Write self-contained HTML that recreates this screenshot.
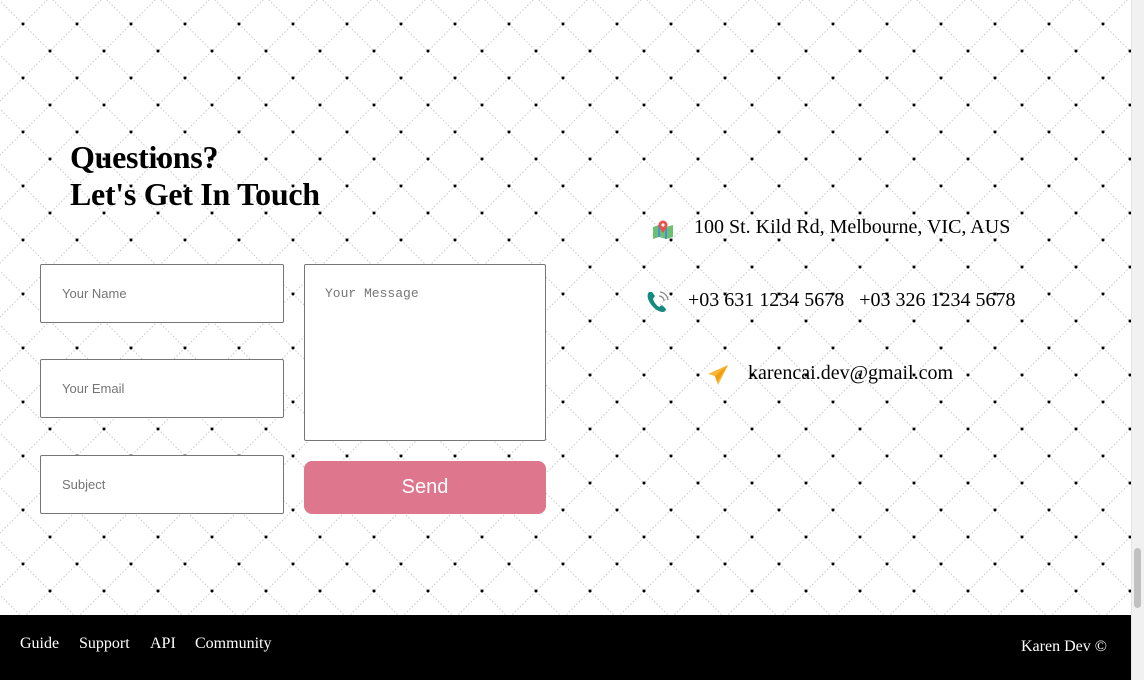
<!DOCTYPE html>
<html><head><style>
html,body{margin:0;padding:0;width:1144px;height:680px;overflow:hidden;background:#fff;font-family:"Liberation Serif",serif;}
#bg{position:absolute;left:0;top:0;width:1131px;height:615px}
.sb{position:absolute;left:1131px;top:0;width:13px;height:680px;background:#f1f1f1;border-left:1px solid #e4e4e4}
.thumb{position:absolute;left:1134px;top:548px;width:7px;height:60px;background:#c1c1c1;border-radius:4px}
h1{position:absolute;left:70px;top:139px;margin:0;font-size:32px;line-height:37px;font-weight:bold;color:#000;letter-spacing:-0.3px}
.in{position:absolute;box-sizing:border-box;border:1px solid #767676;background:#fff;font-family:"Liberation Sans",sans-serif;font-size:13px;color:#757575;padding-left:21px;border-radius:2px}
.ta{font-family:"Liberation Mono",monospace;padding:20px;font-size:13px}
.btn{position:absolute;left:304px;top:461px;width:242px;height:53px;background:#de778d;border-radius:8px;color:#fff;font-family:"Liberation Sans",sans-serif;font-size:20px;text-align:center;line-height:53px}
.t{position:absolute;font-size:20px;color:#000;white-space:nowrap}
footer{position:absolute;left:0;top:615px;width:1131px;height:65px;background:#000;color:#fff;font-size:16px}
footer span{position:absolute;top:20px}
</style></head><body>
<svg id="bg" width="1131" height="615">
<defs><pattern id="p" width="54" height="54" patternUnits="userSpaceOnUse" patternTransform="translate(23,24)">
<path d="M0 0L54 54M54 0L0 54" stroke="#c8c8c8" stroke-width="1" stroke-dasharray="1.5 2"/>
<circle cx="0" cy="0" r="1.5"/><circle cx="54" cy="0" r="1.5"/><circle cx="0" cy="54" r="1.5"/><circle cx="54" cy="54" r="1.5"/><circle cx="27" cy="27" r="1.5"/>
</pattern></defs>
<rect width="1131" height="615" fill="url(#p)"/>
</svg>
<div class="sb"></div><div class="thumb"></div>
<h1>Questions?<br>Let's Get In Touch</h1>
<div class="in" style="left:40px;top:264px;width:244px;height:59px;line-height:57px">Your Name</div>
<div class="in" style="left:40px;top:359px;width:244px;height:59px;line-height:57px">Your Email</div>
<div class="in" style="left:40px;top:455px;width:244px;height:59px;line-height:57px">Subject</div>
<div class="in ta" style="left:304px;top:264px;width:242px;height:177px;line-height:18px;padding-top:20px">Your Message</div>
<div class="btn">Send</div>
<svg style="position:absolute;left:652px;top:219px" width="22" height="20" viewBox="0 0 22 20"><path d="M1 8L7 6L14 8L21 6V18L14 20L7 18L1 20Z" fill="#6cc070"/><path d="M7 6V18M14 8V20" stroke="#4a90d9" stroke-width="2"/><circle cx="11" cy="6" r="4.5" fill="#e8524a"/><circle cx="11" cy="6" r="1.6" fill="#fff"/><path d="M7 8L11 14L15 8Z" fill="#e8524a"/></svg>
<div class="t" style="left:694px;top:216px">100 St. Kild Rd, Melbourne, VIC, AUS</div>
<svg style="position:absolute;left:646px;top:290px" width="24" height="24" viewBox="0 0 24 24"><path d="M3 2C1 4 1 8 4 13C8 19 13 22 17 22C19 22 20 20 20 19L16 15L13 17C10 15 8 12 7 9L9 6L6 2Z" fill="#178a80"/><path d="M13 6A5 5 0 0 1 18 11M14 2A9 9 0 0 1 22 10" stroke="#888" stroke-width="1.3" fill="none"/></svg>
<div class="t" style="left:688px;top:289px">+03 631 1234 5678 &nbsp; +03 326 1234 5678</div>
<svg style="position:absolute;left:707px;top:364px" width="22" height="22" viewBox="0 0 22 22"><path d="M21 1L1 10L8 12L11 21Z" fill="#f7b733"/><path d="M21 1L8 12L10 18Z" fill="#f39c12"/></svg>
<div class="t" style="left:748px;top:362px">karencai.dev@gmail.com</div>
<footer><span style="left:20px">Guide</span><span style="left:79px">Support</span><span style="left:150px">API</span><span style="left:195px">Community</span><span style="left:1021px;top:23px">Karen Dev ©</span></footer>
</body></html>
